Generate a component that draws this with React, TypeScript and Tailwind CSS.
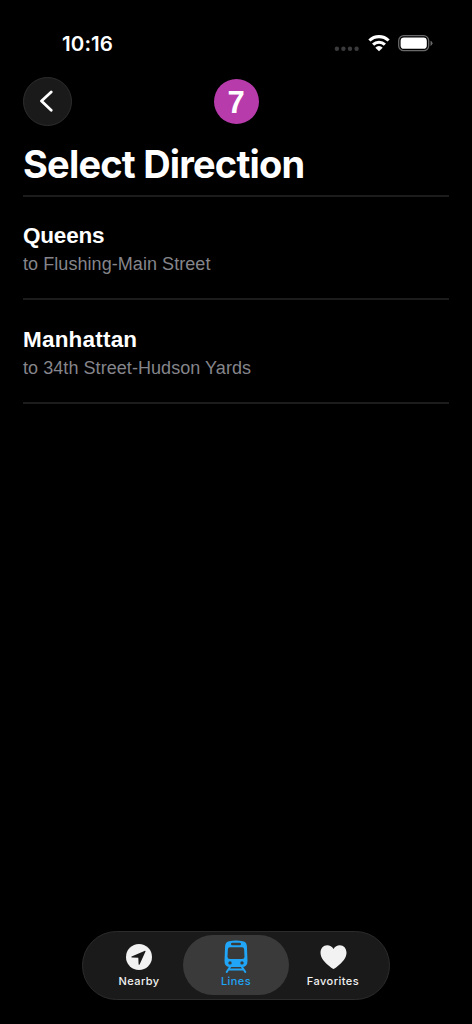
import type { ReactNode } from 'react';

function StatusBar() {
  return (
    <div className="flex h-[76px] items-start justify-between pt-[33px] pr-[39px] pl-[62px]">
      <span className="font-['Inter'] text-[20.5px] leading-[22px] font-semibold tracking-[0.1px]">10:16</span>
      <div className="flex pt-px">
        <svg width="25" height="18" viewBox="0 0 25 18" fill="#3b3b3d">
          <circle cx="2.9" cy="14.8" r="2.2" />
          <circle cx="9.4" cy="14.8" r="2.2" />
          <circle cx="16" cy="14.8" r="2.2" />
          <circle cx="22.6" cy="14.8" r="2.2" />
        </svg>
        <svg className="ml-[9px]" width="22" height="18" viewBox="0 0 22 18" fill="none" stroke="#fff" strokeWidth="3.1">
          <path d="M1.4 6.5a13.8 13.8 0 0 1 19.2 0" />
          <path d="M5.1 10.6a8.5 8.5 0 0 1 11.8 0" />
          <path d="M11 17.2 7.3 13.7a5 5 0 0 1 7.4 0z" fill="#fff" stroke="none" />
        </svg>
        <svg className="ml-[8px]" width="35" height="18" viewBox="0 0 35 18">
          <rect x="0.7" y="1.7" width="30" height="15" rx="5" fill="none" stroke="#69696b" strokeWidth="1.3" />
          <rect x="2.6" y="3.6" width="26.2" height="11.2" rx="3.4" fill="#fff" />
          <path d="M32.5 6.7q2 .7 2 2.6t-2 2.6z" fill="#69696b" />
        </svg>
      </div>
    </div>
  );
}

function Direction({ name, destination, spacing }: { name: string; destination: string; spacing: string }) {
  return (
    <li className="flex h-[104px] flex-col border-b-2 border-[#1c1c1d] pt-[26px] font-['Liberation_Sans'] first:h-[103px] first:pt-[25px]">
      <h2 className={`text-[22.5px] leading-[27px] font-bold ${spacing}`}>{name}</h2>
      <p className="mt-[2px] text-[18px] leading-[27px] tracking-[0.06px] text-[#85858b]">{destination}</p>
    </li>
  );
}

function Tab({ label, active, children }: { label: string; active?: boolean; children: ReactNode }) {
  return (
    <button
      className={
        active
          ? 'flex h-[60px] w-[106px] flex-col items-center rounded-full bg-[#3a3a3a] pt-[5px] text-[#20a5f7]'
          : 'flex h-[60px] w-[88px] flex-col items-center pt-[5px] text-[#f2f2f2]'
      }
    >
      <span className="flex h-[34px] items-center justify-center">{children}</span>
      <span className="font-['Inter'] text-[11px] leading-[14px] font-medium tracking-[0.45px]">{label}</span>
    </button>
  );
}

export default function App() {
  return (
    <div className="flex h-screen w-[472px] flex-col overflow-hidden bg-black text-white">
      <StatusBar />
      <header className="grid h-[50px] grid-cols-[50px_1fr_50px] items-center px-[23px]">
        <button aria-label="Back" className="flex size-[49px] items-center justify-center rounded-full border border-[#2d2d2d] bg-[#1a1a1a]">
          <svg width="13" height="22" viewBox="0 0 13 22" fill="none" stroke="#fff" strokeWidth="2.8" strokeLinecap="round" strokeLinejoin="round" className="mr-[3px]">
            <path d="M11.2 2 1.5 11l9.7 9.2" />
          </svg>
        </button>
        <div className="mx-auto flex size-[45px] items-center justify-center rounded-full bg-[#b73bab] font-['Liberation_Sans'] text-[31px] leading-none font-bold">
          <span className="pt-[2px]">7</span>
        </div>
      </header>
      <main className="flex-1 px-[23px]">
        <h1 className="h-[71px] border-b-2 border-[#1c1c1d] pt-[15px] font-['Inter'] text-[38px] leading-[46px] font-bold tracking-[-0.8px] whitespace-nowrap">Select Direction</h1>
        <ul>
          <Direction name="Queens" destination="to Flushing-Main Street" spacing="tracking-[-0.2px]" />
          <Direction name="Manhattan" destination="to 34th Street-Hudson Yards" spacing="tracking-[0.2px]" />
        </ul>
      </main>
      <nav className="mx-auto mb-[24px] flex h-[69px] w-[308px] items-start justify-center rounded-full border border-[#2c2c2c] bg-[#1a1a1a] pt-[3px]">
        <Tab label="Nearby">
          <svg width="26" height="26" viewBox="0 0 26 26">
            <circle cx="13" cy="13" r="13" fill="currentColor" />
            <path d="M19 6.8 5.6 12.5q-.8.6.2.9l6.5.3.3 6.5q.3 1 1 .2l5.9-13q.1-.7-.5-.6z" fill="#1a1a1a" />
          </svg>
        </Tab>
        <Tab label="Lines" active>
          <svg width="24" height="34" viewBox="0 0 24 34">
            <path
              fillRule="evenodd"
              fill="currentColor"
              d="M5.2 1.2q6.8-1.3 13.6 0Q22.6 2 22.9 6L23.5 21Q23.5 27 17.8 27H6.2Q.5 27 .5 21L1.1 6Q1.4 2 5.2 1.2ZM8.2 2.8a1.2 1.2 0 0 0 0 2.4h7.6a1.2 1.2 0 0 0 0-2.4ZM6 7.2Q4 7.2 3.9 9.2L3.5 16.5Q3.5 19 6 19H18Q20.5 19 20.5 16.5L20.1 9.2Q20 7.2 18 7.2ZM6 21.2a1.7 1.7 0 1 0 0 3.4 1.7 1.7 0 0 0 0-3.4ZM18 21.2a1.7 1.7 0 1 0 0 3.4 1.7 1.7 0 0 0 0-3.4Z"
            />
            <path d="M6.3 26.5 2.7 32M17.7 26.5l3.6 5.5M5.3 29.5h13.4" fill="none" stroke="currentColor" strokeWidth="2" strokeLinecap="round" />
          </svg>
        </Tab>
        <Tab label="Favorites">
          <svg width="27" height="24" viewBox="0 0 27 24" fill="currentColor">
            <path d="M13.5 24Q12.7 24 9.5 21.3C4.5 17.2.5 12.7.5 7.7.5 3.3 3.4.2 7.2.2q4 0 6.3 3.7Q15.8.2 19.8.2c3.8 0 6.7 3.1 6.7 7.5 0 5-4 9.5-9 13.6Q14.3 24 13.5 24z" />
          </svg>
        </Tab>
      </nav>
    </div>
  );
}
